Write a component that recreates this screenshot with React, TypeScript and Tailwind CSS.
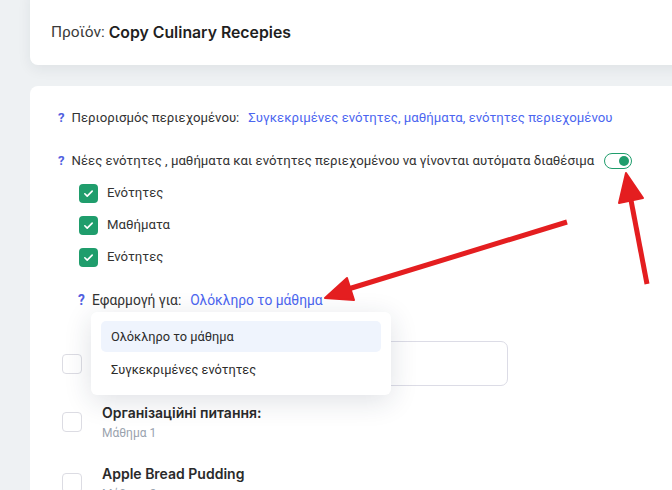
import React from 'react';

const greek = "font-['Roboto','Noto_Sans',sans-serif]";
const latin = "font-['Inter','Roboto',sans-serif]";

// Green checked box with a white tick
const CheckedBox = () => (
  <span className="flex h-[19px] w-[19px] items-center justify-center rounded-[4px] bg-[#1f9d6c]">
    <svg width="11" height="11" viewBox="0 0 12 12" fill="none">
      <path d="M2 6.3l2.6 2.6L10 3.4" stroke="white" strokeWidth="1.8" strokeLinecap="round" strokeLinejoin="round" />
    </svg>
  </span>
);

const EmptyBox = () => <span className="block h-[20px] w-[20px] shrink-0 rounded-[4px] border border-[#dcdce3] bg-white" />;

const Hint = () => <span className="mr-[7px] font-bold text-[#5160e0]">?</span>;

const sections = ['Ενότητες', 'Μαθήματα', 'Ενότητες'];

const lessons = [
  { title: 'Організаційні питання:', sub: 'Μάθημα 1' },
  { title: 'Apple Bread Pudding', sub: 'Μάθημα 2' },
];

export default function App() {
  return (
    <div className={`relative h-[490px] w-[672px] overflow-hidden bg-[#eef1f3] ${greek}`}>
      {/* product header */}
      <div className="-mt-3 pl-[30px]">
        <div className="flex h-[77px] w-[680px] items-center rounded-[8px] bg-white pl-[21px] pt-3 shadow-[0_4px_14px_rgba(30,40,60,0.07)]">
          <span className="text-[15.5px] text-[#3a3a3a]">Προϊόν: </span>
          <span className={`ml-1 text-[15.8px] font-semibold text-[#1f1f1f] ${latin}`}>Copy Culinary Recepies</span>
        </div>
      </div>

      {/* content settings */}
      <div className="mt-[21px] pl-[30px]">
        <div className="w-[680px] rounded-tl-[8px] bg-white pb-10 pt-[22px]">
          <div className="pl-[28px] text-[13.2px] leading-5 text-[#333]">
            <div className="flex items-center">
              <Hint />
              <span>Περιορισμός περιεχομένου:</span>
              <span className="ml-[9px] text-[#4c66f0]">Συγκεκριμένες ενότητες, μαθήματα, ενότητες περιεχομένου</span>
            </div>

            <div className="mt-[23px] flex items-center">
              <Hint />
              <span>Νέες ενότητες , μαθήματα και ενότητες περιεχομένου να γίνονται αυτόματα διαθέσιμα</span>
              <span className="ml-[10px] flex h-4 w-7 items-center justify-end rounded-full border-[1.5px] border-[#1f9d6c] pr-[2px]">
                <span className="h-[10px] w-[10px] rounded-full bg-[#1f9d6c]" />
              </span>
            </div>

            <div className="ml-[21px] mt-3 flex flex-col gap-3">
              {sections.map((s, i) => (
                <div key={i} className="flex h-5 items-center gap-[9px]">
                  <CheckedBox />
                  <span>{s}</span>
                </div>
              ))}
            </div>

            <div className="relative ml-5 mt-[23px] flex items-center text-[13.8px]">
              <Hint />
              <span>Εφαρμογή για:</span>
              <span className="ml-[9px] text-[#4c66f0]">Ολόκληρο το μάθημα</span>

              {/* open select menu */}
              <div className="absolute left-[13px] top-[22px] z-10 flex w-[300px] flex-col gap-[2px] rounded-[6px] bg-white p-[10px] pt-[9px] text-[12.8px] text-[#2b2b2b] shadow-[0_6px_28px_rgba(30,40,70,0.14)]">
                <div className="flex h-[31px] items-center rounded-[5px] bg-[#eff4fd] px-[10px]">Ολόκληρο το μάθημα</div>
                <div className="flex h-[31px] items-center px-[10px]">Συγκεκριμένες ενότητες</div>
              </div>
            </div>
          </div>

          {/* lesson picker */}
          <div className="mt-[31px] pl-[32px]">
            <div className="flex items-center gap-[18px]">
              <EmptyBox />
              <div className="h-[45px] w-[408px] rounded-[7px] border border-[#dcdce6] bg-white" />
            </div>

            <div className="mt-[17px] flex flex-col gap-[22px]">
              {lessons.map((l) => (
                <div key={l.title} className="flex items-start gap-[20px]">
                  <div className="pt-[9px]">
                    <EmptyBox />
                  </div>
                  <div>
                    <div className={`text-[14px] font-semibold leading-5 text-[#2a2a2a] ${latin}`}>{l.title}</div>
                    <div className="mt-[1px] text-[12px] leading-[18px] text-[#9aa3ae]">{l.sub}</div>
                  </div>
                </div>
              ))}
            </div>
          </div>
        </div>
      </div>

      {/* red callout arrows */}
      <svg className="pointer-events-none absolute left-0 top-0 z-20" width="672" height="490">
        <g fill="#e41e20" stroke="#e41e20" strokeLinejoin="round">
          <line x1="567" y1="222" x2="345" y2="290" strokeWidth="5" />
          <polygon points="325,298 347,278 354,300" strokeWidth="2" />
          <line x1="647" y1="284" x2="630" y2="195" strokeWidth="5" />
          <polygon points="626,173 643,198 619,203" strokeWidth="2" />
        </g>
      </svg>
    </div>
  );
}
